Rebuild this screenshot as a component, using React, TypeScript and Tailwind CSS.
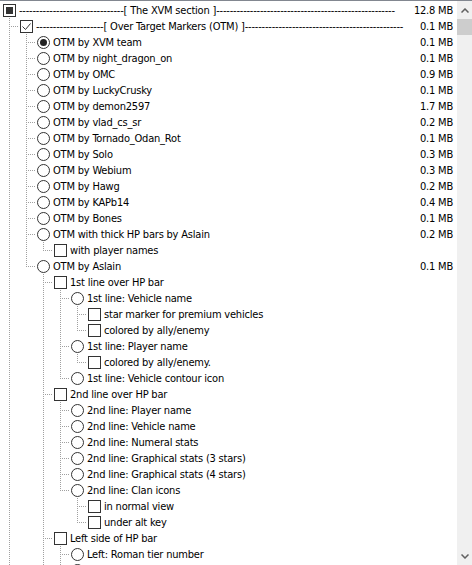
import React from "react";

type Item = {
  label: string;
  kind: "check" | "radio";
  on?: boolean;
  partial?: boolean;
  size?: string;
  children?: Item[];
};

const radio = (label: string, size?: string, children?: Item[], on?: boolean): Item => ({ label, kind: "radio", size, children, on });
const check = (label: string, size?: string, children?: Item[]): Item => ({ label, kind: "check", size, children });

const dashes = (n: number) => "-".repeat(n);

const tree: Item[] = [
  {
    label: `${dashes(31)}[ The XVM section ]${dashes(53)}`,
    kind: "check",
    partial: true,
    size: "12.8 MB",
    children: [
      {
        label: `${dashes(20)}[ Over Target Markers (OTM) ]${dashes(47)}`,
        kind: "check",
        on: true,
        size: "0.1 MB",
        children: [
          radio("OTM by XVM team", "0.1 MB", undefined, true),
          radio("OTM by night_dragon_on", "0.1 MB"),
          radio("OTM by OMC", "0.9 MB"),
          radio("OTM by LuckyCrusky", "0.1 MB"),
          radio("OTM by demon2597", "1.7 MB"),
          radio("OTM by vlad_cs_sr", "0.2 MB"),
          radio("OTM by Tornado_Odan_Rot", "0.1 MB"),
          radio("OTM by Solo", "0.3 MB"),
          radio("OTM by Webium", "0.3 MB"),
          radio("OTM by Hawg", "0.2 MB"),
          radio("OTM by KAPb14", "0.4 MB"),
          radio("OTM by Bones", "0.1 MB"),
          radio("OTM with thick HP bars by Aslain", "0.2 MB", [check("with player names")]),
          radio("OTM by Aslain", "0.1 MB", [
            check("1st line over HP bar", undefined, [
              radio("1st line: Vehicle name", undefined, [
                check("star marker for premium vehicles"),
                check("colored by ally/enemy"),
              ]),
              radio("1st line: Player name", undefined, [check("colored by ally/enemy.")]),
              radio("1st line: Vehicle contour icon"),
            ]),
            check("2nd line over HP bar", undefined, [
              radio("2nd line: Player name"),
              radio("2nd line: Vehicle name"),
              radio("2nd line: Numeral stats"),
              radio("2nd line: Graphical stats (3 stars)"),
              radio("2nd line: Graphical stats (4 stars)"),
              radio("2nd line: Clan icons", undefined, [check("in normal view"), check("under alt key")]),
            ]),
            check("Left side of HP bar", undefined, [
              radio("Left: Roman tier number"),
              radio("Left: Arabic tier number"),
              radio("Left: Vehicle class icon"),
            ]),
            check("Right side of HP bar", undefined, [radio("Right: HP in percent"), radio("Right: HP in numbers")]),
          ]),
        ],
      },
      check(`${dashes(20)}[ Damage Log ]${dashes(45)}`, "0.1 MB"),
    ],
  },
];

type Row = { item: Item; level: number; lines: boolean[]; last: boolean };

function flatten(items: Item[], level: number, lines: boolean[], out: Row[]) {
  items.forEach((item, i) => {
    const last = i === items.length - 1;
    out.push({ item, level, lines, last });
    if (item.children) flatten(item.children, level + 1, level >= 1 ? [...lines, !last] : [], out);
  });
  return out;
}

const rows = flatten(tree, 0, [], []);

function Guides({ level, lines, last }: { level: number; lines: boolean[]; last: boolean }) {
  if (level === 0) return null;
  const w = level * 17;
  const cx = (k: number) => k * 17 + 6.5;
  return (
    <svg width={w} height={16} className="shrink-0" shapeRendering="crispEdges">
      <g stroke="#a0a0a0" strokeWidth={1} strokeDasharray="1 1">
        {lines.map((on, k) => (on ? <line key={k} x1={cx(k)} y1={0} x2={cx(k)} y2={16} /> : null))}
        <line x1={cx(level - 1)} y1={0} x2={cx(level - 1)} y2={last ? 9 : 16} />
        <line x1={cx(level - 1) + 1.5} y1={8.5} x2={w - 1} y2={8.5} />
      </g>
    </svg>
  );
}

function Control({ item }: { item: Item }) {
  if (item.kind === "radio") {
    return (
      <span className="flex size-[13px] shrink-0 items-center justify-center rounded-full border border-[#333] bg-white">
        {item.on && <span className="size-[7px] rounded-full bg-[#222]" />}
      </span>
    );
  }
  return (
    <span className="flex size-[13px] shrink-0 items-center justify-center border border-[#333] bg-white">
      {item.partial && <span className="size-[7px] bg-[#333]" />}
      {item.on && (
        <svg width="11" height="11" viewBox="0 0 11 11">
          <path d="M1.5 5.5 L4.5 8.5 L9.5 2.5" fill="none" stroke="#333" strokeWidth="1" />
        </svg>
      )}
    </span>
  );
}

export default function App() {
  return (
    <div className="flex h-[565px] w-[472px] overflow-hidden border-t border-[#828790] bg-white font-['DejaVu_Sans_Condensed','DejaVu_Sans',sans-serif] text-[11px] leading-4 tracking-[-0.2px] text-black">
      <div className="flex-1 overflow-hidden pt-px">
        {rows.map((row, i) => (
          <div key={i} className="flex h-4 items-center pl-[3px] pr-1">
            <Guides level={row.level} lines={row.lines} last={row.last} />
            <Control item={row.item} />
            <span className="ml-[3px] flex-1 overflow-hidden whitespace-nowrap pt-px">{row.item.label}</span>
            {row.item.size && <span className="ml-2 whitespace-nowrap pt-px">{row.item.size}</span>}
          </div>
        ))}
      </div>
      <div className="flex w-[15px] shrink-0 flex-col bg-[#f0f0f0]">
        <div className="flex h-[18px] items-center justify-center">
          <svg width="8" height="5" viewBox="0 0 8 5">
            <path d="M0.5 4.5 L4 1 L7.5 4.5" fill="none" stroke="#606060" strokeWidth="1.5" />
          </svg>
        </div>
        <div className="h-4 bg-[#cdcdcd]" />
        <div className="flex-1" />
        <div className="flex h-[17px] items-center justify-center">
          <svg width="8" height="5" viewBox="0 0 8 5">
            <path d="M0.5 0.5 L4 4 L7.5 0.5" fill="none" stroke="#606060" strokeWidth="1.5" />
          </svg>
        </div>
      </div>
    </div>
  );
}
